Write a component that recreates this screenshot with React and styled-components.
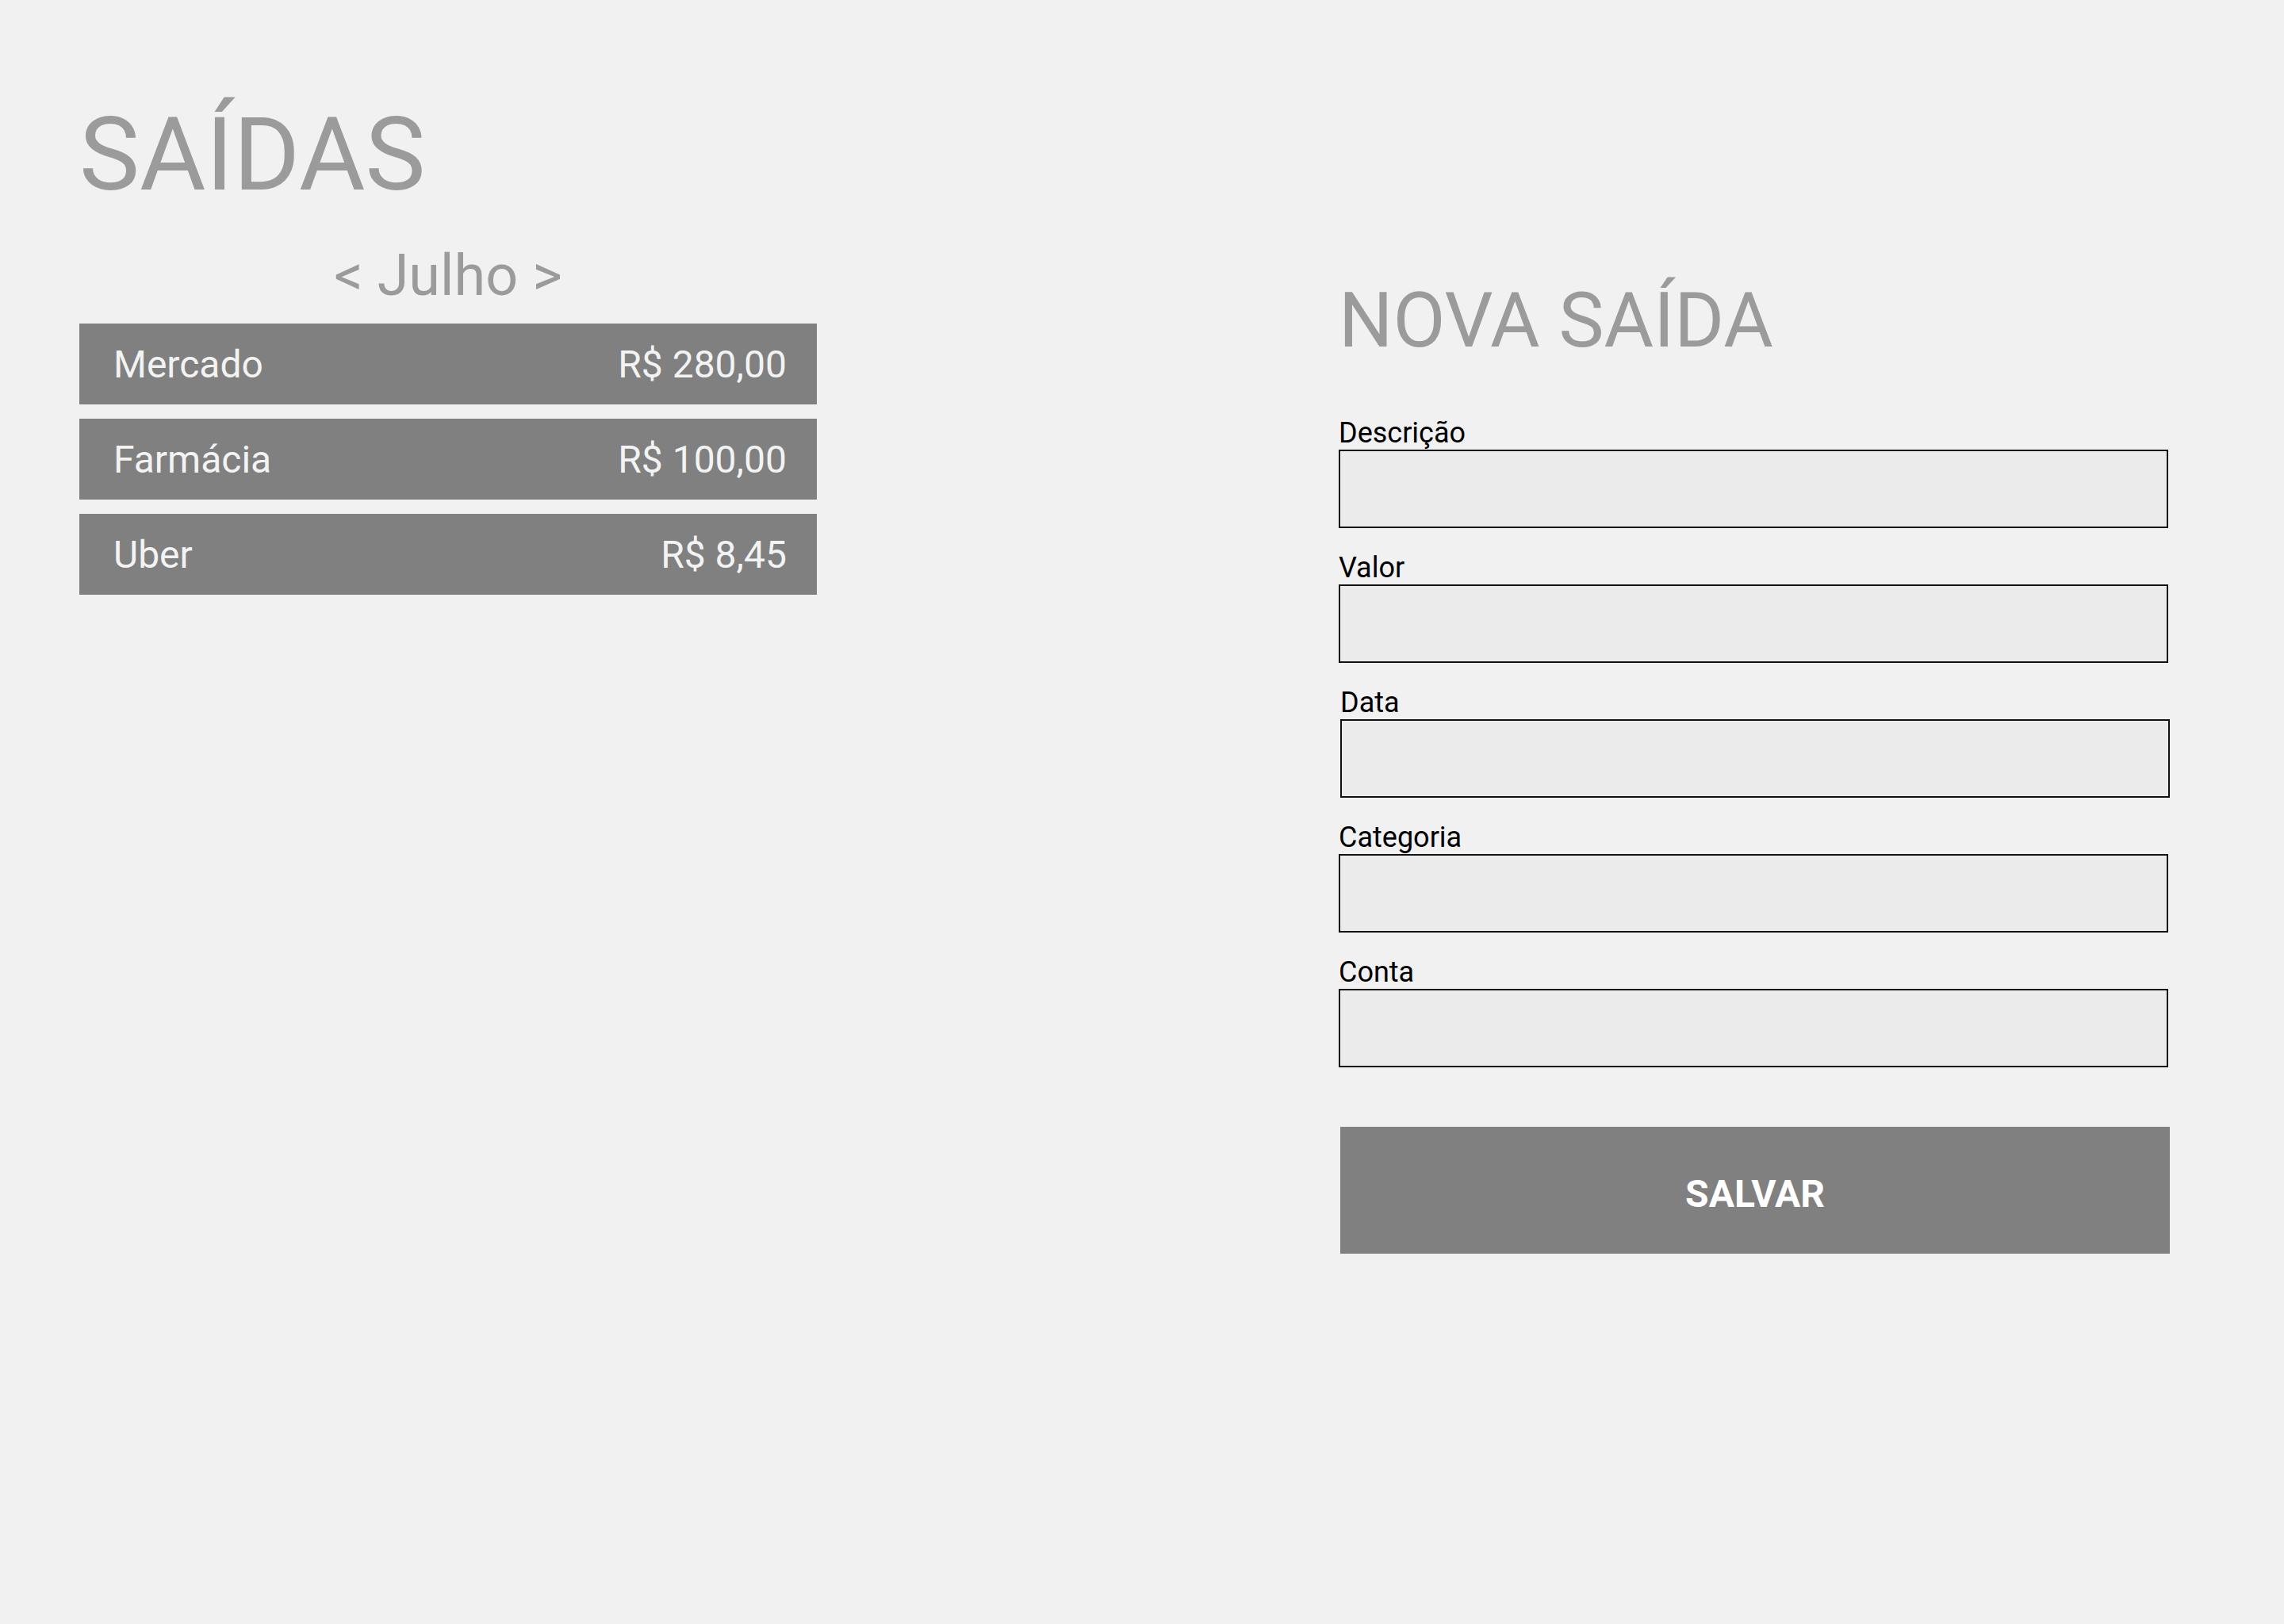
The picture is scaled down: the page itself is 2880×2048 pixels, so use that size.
import React from 'react';
import styled, { createGlobalStyle } from 'styled-components';

const GlobalStyle = createGlobalStyle`
  html, body {
    margin: 0;
    padding: 0;
    background: #f1f1f1;
  }
  body {
    font-family: Roboto, "Liberation Sans", sans-serif;
    min-height: 2048px;
  }
`;

const Page = styled.div`
  display: flex;
  align-items: flex-start;
  padding: 120px 0 0 100px;
`;

const ListColumn = styled.section`
  width: 930px;
  display: flex;
  flex-direction: column;
`;

const Title = styled.h1`
  margin: 0;
  font-size: 128px;
  font-weight: 400;
  line-height: 151px;
  color: #9b9b9b;
`;

const MonthNav = styled.div`
  margin-top: 34px;
  font-size: 72px;
  line-height: 85px;
  color: #9b9b9b;
  text-align: center;
`;

const List = styled.ul`
  list-style: none;
  margin: 18px 0 0;
  padding: 0;
  display: flex;
  flex-direction: column;
  gap: 18px;
`;

const Item = styled.li`
  height: 102px;
  background: #808080;
  color: #f3f3f3;
  font-size: 48px;
  display: flex;
  align-items: center;
  justify-content: space-between;
  padding: 0 38px 0 43px;
`;

const FormColumn = styled.section`
  width: 1048px;
  margin-left: 658px;
  padding-top: 227px;
`;

const FormTitle = styled.h2`
  margin: 0;
  font-size: 96px;
  font-weight: 400;
  line-height: 115px;
  color: #9b9b9b;
`;

const Form = styled.form`
  margin-top: 64px;
  display: flex;
  flex-direction: column;
  gap: 30px;
`;

const Field = styled.label`
  display: flex;
  flex-direction: column;
  margin-left: ${p => p.$shift || 0}px;
`;

const LabelText = styled.span`
  font-size: 36px;
  line-height: 41px;
  color: #000;
`;

const Input = styled.input`
  box-sizing: border-box;
  width: 1046px;
  height: 99px;
  margin: 0;
  border: 2px solid #111;
  background: #ebebeb;
  font-family: inherit;
  font-size: 36px;
  padding: 0 20px;
  outline: none;
`;

const SaveButton = styled.button`
  margin-top: 45px;
  margin-left: 2px;
  width: 1046px;
  height: 160px;
  padding-top: 10px;
  border: none;
  background: #808080;
  color: #fff;
  font-family: Roboto, "Liberation Sans", sans-serif;
  font-size: 48px;
  font-weight: 700;
  cursor: pointer;
`;

const saidas = [
  { id: 1, descricao: 'Mercado', valor: 'R$ 280,00' },
  { id: 2, descricao: 'Farmácia', valor: 'R$ 100,00' },
  { id: 3, descricao: 'Uber', valor: 'R$ 8,45' },
];

const campos = [
  { id: 'descricao', text: 'Descrição' },
  { id: 'valor', text: 'Valor' },
  { id: 'data', text: 'Data', shift: 2 },
  { id: 'categoria', text: 'Categoria' },
  { id: 'conta', text: 'Conta' },
];

const App = () => (
  <>
    <GlobalStyle />
    <Page>
      <ListColumn>
        <Title>SAÍDAS</Title>
        <MonthNav>&lt; Julho &gt;</MonthNav>
        <List>
          {saidas.map(saida => (
            <Item key={saida.id}>
              <span>{saida.descricao}</span>
              <span>{saida.valor}</span>
            </Item>
          ))}
        </List>
      </ListColumn>
      <FormColumn>
        <FormTitle>NOVA SAÍDA</FormTitle>
        <Form onSubmit={e => e.preventDefault()}>
          {campos.map(campo => (
            <Field key={campo.id} $shift={campo.shift}>
              <LabelText>{campo.text}</LabelText>
              <Input name={campo.id} />
            </Field>
          ))}
          <SaveButton type="submit">SALVAR</SaveButton>
        </Form>
      </FormColumn>
    </Page>
  </>
);

export default App;
